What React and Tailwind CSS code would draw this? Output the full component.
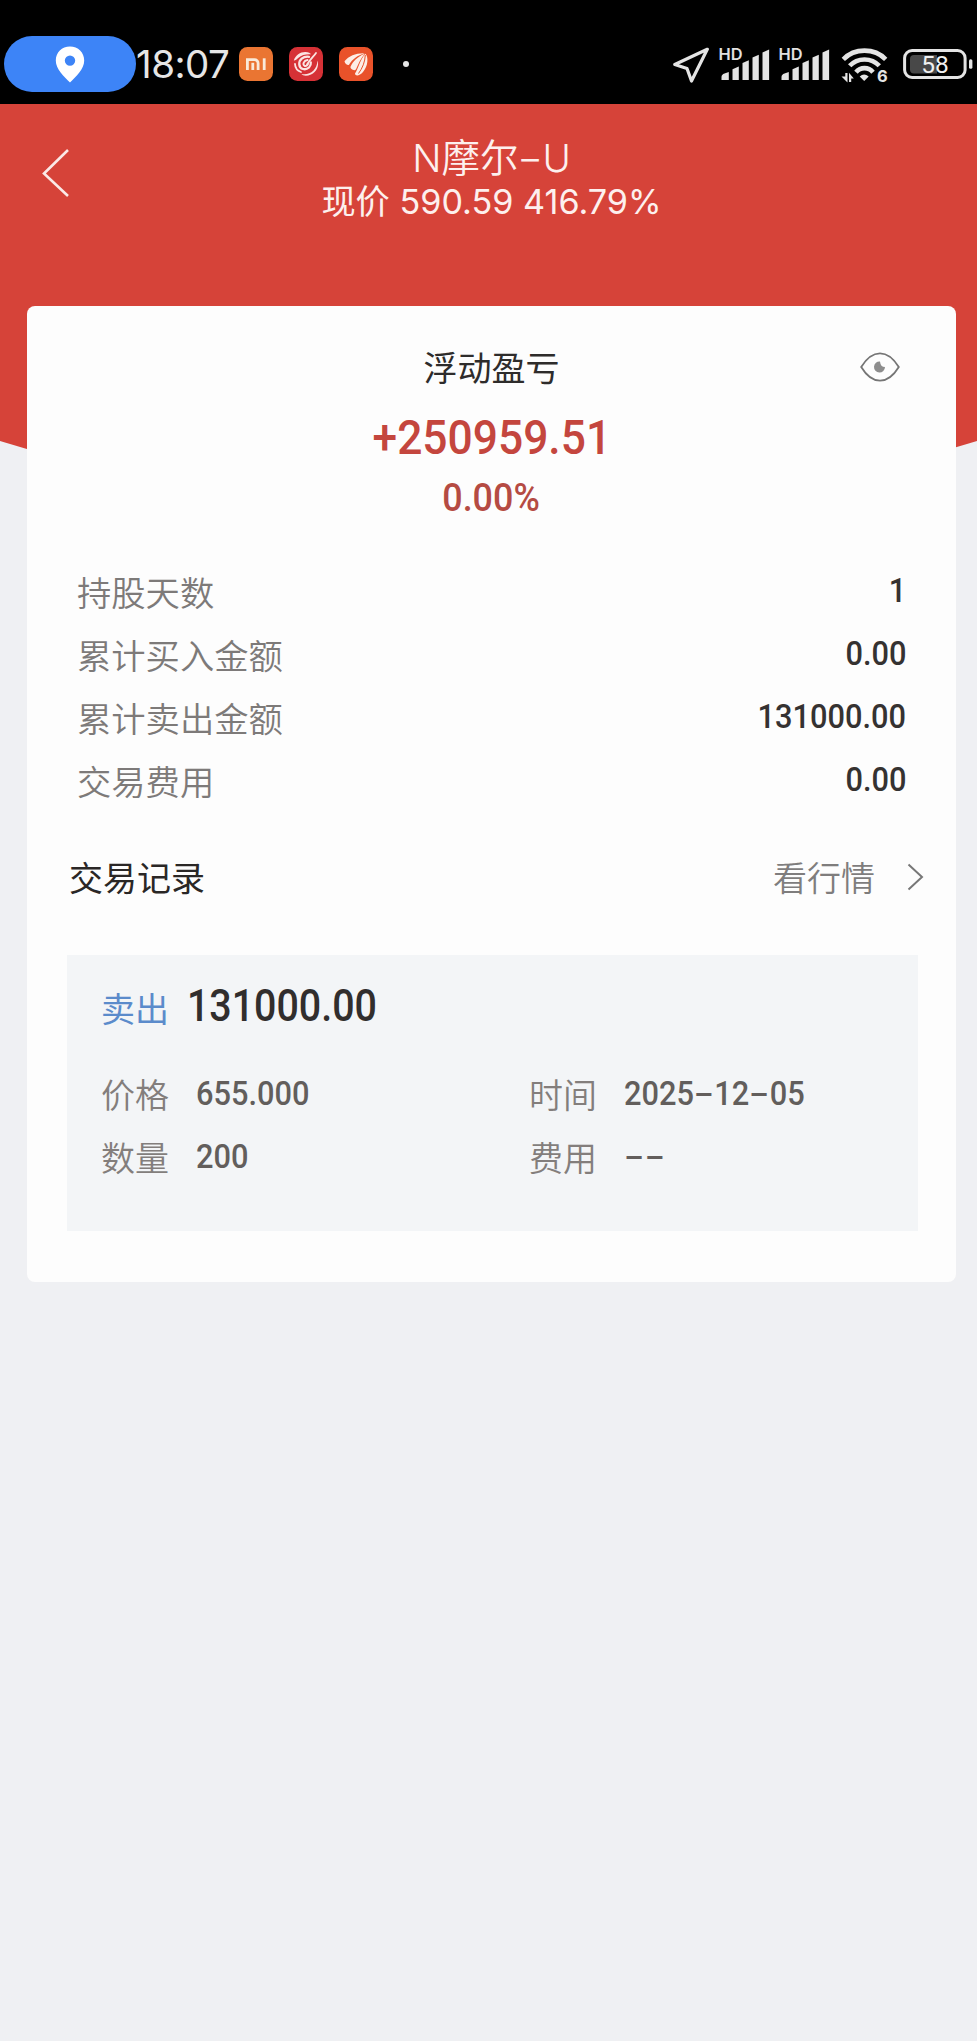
const cjk = "font-['Noto_Sans_CJK_SC',sans-serif]";
const din = "font-['Roboto','Noto_Sans_CJK_SC',sans-serif]";

function LocationPill() {
  return (
    <div className="ml-1 flex h-14 w-[132px] items-center justify-center rounded-full bg-[#3d84f7]">
      <svg width="30" height="37" viewBox="0 0 30 37">
        <path
          fill="#fff"
          fillRule="evenodd"
          d="M15 0.500C6.800 0.500 0.800 6.600 0.800 14.400c0 8.600 8.200 16 14.200 22.100 6-6.100 14.200-13.500 14.200-22.100C29.200 6.600 23.200 0.500 15 0.500zM15 9.400a5.200 5.200 0 1 1 0 10.400 5.200 5.200 0 0 1 0-10.400z"
        />
      </svg>
    </div>
  );
}

function MiIcon() {
  return (
    <svg width="34" height="34" viewBox="0 0 34 34">
      <rect width="34" height="34" rx="8.5" fill="#ea7532" />
      <g fill="none" stroke="#f9ead9" strokeWidth="2.8">
        <path d="M8.400 23V12.700H15.500a3.600 3.600 0 0 1 3.600 3.600V23" />
        <path d="M13.800 15.800V23" />
        <path d="M25.200 11.300V23" />
      </g>
    </svg>
  );
}

function SwirlIcon() {
  return (
    <svg width="34" height="34" viewBox="0 0 34 34">
      <rect width="34" height="34" rx="8.5" fill="#d63136" />
      <path fill="#fbe3e2" d="M4.800 13.500C6.500 8 11.500 4.800 16.500 5c3 .1 5 1 5.500 2.300C17 7 12.500 8 9.500 10.800 7.800 12.300 6 13.800 4.800 13.500z" />
      <path fill="#fbe3e2" d="M28.500 13.500c1.800 5.500-1 11.500-6.500 14-4 1.800-8.200 1.500-9.500-.5 4.500.8 8.800-.2 11.800-3.200 2.700-2.700 3.900-6.300 4.200-10.300z" />
      <g fill="none" stroke="#fbe3e2" strokeLinecap="round">
        <path d="M27 6C24.500 9.500 21.500 12 18 17.500" strokeWidth="1.800" />
        <path d="M20 9.800C14 9 9.800 13 10.300 17.500C10.800 22.500 16.500 23.500 20 20.500C21.500 19 22 17 21.800 15.500" strokeWidth="2.300" />
        <path d="M18.500 13C14.500 13.500 13.500 17.500 15.500 18.800C17 19.500 18.500 18.500 19 17" strokeWidth="1.900" />
        <path d="M6 17C6.200 21 8.500 23.800 12 25" strokeWidth="1.800" />
      </g>
    </svg>
  );
}

function WingIcon() {
  return (
    <svg width="34" height="34" viewBox="0 0 34 34">
      <rect width="34" height="34" rx="8.5" fill="#e9522a" />
      <g fill="#fdeee6">
        <path d="M5.500 14.200C10 9 17 6 25.500 6.300C18.500 8.500 13.500 12 10 17.800C9 19 5.800 16.500 5.500 14.200z" />
        <path d="M11.500 19.800C14 14.500 18.500 9.500 25.800 6.800C21.500 11.500 19.500 17 17 22.300C15.500 24.500 11 22 11.500 19.800z" />
        <path d="M16 26.500C19.500 21.500 21 12.500 26.500 6.800C29.500 10 29.300 19 24 25C21 28.500 16.500 30 16 26.500z" />
      </g>
      <path d="M26.300 8C26 15 23.500 21 19.500 26.500" fill="none" stroke="#e9522a" strokeWidth="1" />
    </svg>
  );
}

function Signal() {
  return (
    <svg className="overflow-visible" width="52" height="36" viewBox="0 0 52 36">
      <text x="-0.5" y="13.700" fontSize="15.800" fontWeight="600" textLength="24" lengthAdjust="spacingAndGlyphs" fill="#e2e2e2" className="font-['Inter',sans-serif]">HD</text>
      <g fill="#e4e4e4">
        <path d="M2.500 34v-3q0-2.500 3-3.500l4.300-1.500V34z" />
        <path d="M13.500 34V23.200l6.300-2.700V34z" />
        <path d="M23.500 34V17l6.300-2.700V34z" />
        <path d="M33.500 34V11.500l6.300-2.700V34z" />
        <path d="M43.500 34V6.500l6.600-3V34z" />
      </g>
    </svg>
  );
}

function Wifi() {
  return (
    <svg className="overflow-visible" width="50" height="36" viewBox="0 0 50 36">
      <g fill="none" stroke="#e4e4e4" strokeWidth="4.600">
        <path d="M2.300 13.300C13.500 1.700 33.500 1.700 44.700 13.300" />
        <path d="M8.700 19.800C16.500 11.300 30.500 11.300 38.300 19.800" />
        <path d="M15 26.200C19.500 20.700 27.500 20.700 32 26.200" />
      </g>
      <path fill="#e4e4e4" d="M18.700 30.500Q23 26.500 27.700 30.500L23.200 35z" />
      <path fill="#e4e4e4" d="M4.300 27H6.500V36.500L0.500 30.500H4.300zM8 36V26.800L12.800 32.500H10.200V36z" />
      <text x="36" y="36" fontSize="16.500" fontWeight="700" fill="#e4e4e4" className="font-['Inter',sans-serif]">6</text>
    </svg>
  );
}

function Battery() {
  return (
    <svg className="overflow-visible" width="70" height="34" viewBox="0 0 70 34">
      <rect x="1.600" y="3.500" width="60.500" height="27" rx="7.500" fill="none" stroke="#e4e4e4" strokeWidth="3" />
      <path d="M7 12a4 4 0 0 1 4-4h23v18.500H11a4 4 0 0 1-4-4z" fill="#484848" />
      <rect x="66" y="12.300" width="3.400" height="9.500" rx="1.500" fill="#e4e4e4" />
      <text x="32" y="26" textAnchor="middle" fontSize="24.500" fontWeight="400" fill="#f0f0f0" className="font-['Roboto',sans-serif]">58</text>
    </svg>
  );
}

function StatusBar() {
  return (
    <div className="flex h-[104px] w-full shrink-0 items-center justify-between bg-black pt-6">
      <div className="flex items-center">
        <LocationPill />
        <span className="w-[103px] font-['Inter',sans-serif] text-[38.500px] leading-none tracking-[-0.5px] text-[#e6e6e6]">18:07</span>
        <div className="flex items-center gap-4">
          <MiIcon />
          <SwirlIcon />
          <WingIcon />
        </div>
        <span className="ml-[30px] size-1.5 rounded-full bg-[#e6e6e6]" />
      </div>
      <div className="flex items-center pr-1">
        <svg width="38" height="38" viewBox="0 0 38 38" className="mr-2">
          <path d="M34.300 4.300L1.800 19.500L14 23.500L18.500 36z" fill="none" stroke="#e4e4e4" strokeWidth="3.200" strokeLinejoin="round" />
        </svg>
        <Signal />
        <div className="ml-2"><Signal /></div>
        <div className="ml-2.5"><Wifi /></div>
        <div className="ml-3"><Battery /></div>
      </div>
    </div>
  );
}

function Dash({ wide }) {
  return (
    <span className={wide ? "inline-block w-6 scale-x-[1.5] text-center" : "inline-block w-[22.500px] scale-x-[1.9] text-center"}>-</span>
  );
}

function SummaryRow({ label, value }) {
  return (
    <div className="flex h-[63px] items-center justify-between">
      <span className={`${cjk} text-[34.300px] leading-none font-[350] text-[#7d7a79]`}>{label}</span>
      <span className={`${din} mb-1 origin-right scale-x-[0.905] text-[34px] leading-none font-medium text-[#353231]`}>{value}</span>
    </div>
  );
}

function Field({ label, children }) {
  return (
    <div className="flex h-[63px] items-center">
      <span className={`${cjk} w-[95px] text-[34px] leading-none font-[350] text-[#837e7c]`}>{label}</span>
      <span className={`${din} mb-0.5 origin-left scale-x-[0.905] text-[34px] leading-none font-medium whitespace-nowrap text-[#625e5c]`}>{children}</span>
    </div>
  );
}

export default function App() {
  return (
    <div className="flex h-[2041px] w-[977px] flex-col overflow-hidden bg-[#eff0f3]">
      <StatusBar />

      <header className="grid h-[364px] shrink-0">
        <svg className="col-start-1 row-start-1 block" width="977" height="364" viewBox="0 0 977 364">
          <path d="M0 0H977V337Q488.500 490 0 337z" fill="#d64339" />
        </svg>
        <div className="col-start-1 row-start-1 flex">
          <svg className="mt-[43px] ml-[41px]" width="30" height="52" viewBox="0 0 30 52">
            <path d="M27 3L3 26.500L27 49" fill="none" stroke="#fbe9e7" strokeWidth="2.600" />
          </svg>
          <div className="mr-[65px] flex flex-1 flex-col items-center pt-8 text-[#fdf0ee]">
            <h1 className="font-['Inter','Noto_Sans_CJK_SC',sans-serif] text-[38.500px] leading-[44px] font-[350]">
              N摩尔<Dash wide />U
            </h1>
            <p className="font-['Inter','Noto_Sans_CJK_SC',sans-serif] text-[34.200px] leading-[44px] font-normal">
              现价 590.59 416.79%
            </p>
          </div>
        </div>
      </header>

      <main className="z-10 -mt-[162px] ml-[27px] flex h-[976px] w-[929px] shrink-0 flex-col rounded-lg bg-[#fdfdfd]">
        <section className="grid grid-cols-[1fr_auto_1fr] items-center pt-9">
          <span />
          <h2 className={`${cjk} text-[34px] leading-[50px] text-[#2e2c2b]`}>浮动盈亏</h2>
          <svg className="mr-[56px] justify-self-end" width="40" height="30" viewBox="0 0 40 30">
            <path d="M1.200 15C7 5.500 13 1.300 20 1.300S33 5.500 38.800 15C33 24.500 27 28.700 20 28.700S7 24.500 1.200 15z" fill="none" stroke="#757575" strokeWidth="1.800" />
            <path d="M20 9.500a5.500 5.500 0 1 0 5 5.500q-4.500 0-5-5.500z" fill="#8d8d8d" />
          </svg>
        </section>
        <div className={`${din} flex flex-col items-center font-medium`}>
          <span className="mt-4 scale-x-[0.905] text-[49px] leading-[60px] text-[#c4463e]">+250959.51</span>
          <span className="mt-[5px] scale-x-[0.92] text-[39px] leading-[50px] text-[#b54b43]">0.00%</span>
        </div>

        <section className="mt-[37px] flex flex-col pr-[50px] pl-[50px]">
          <SummaryRow label="持股天数" value="1" />
          <SummaryRow label="累计买入金额" value="0.00" />
          <SummaryRow label="累计卖出金额" value="131000.00" />
          <SummaryRow label="交易费用" value="0.00" />
        </section>

        <section className={`${cjk} mt-10 flex h-[50px] items-center pr-8 pl-[42px] text-[34px] leading-none`}>
          <h3 className="flex-1 font-normal text-[#2a2726]">交易记录</h3>
          <span className="font-[350] text-[#7f7d7d]">看行情</span>
          <svg className="ml-8" width="17" height="28" viewBox="0 0 17 28">
            <path d="M1.500 1.500L15 14L1.500 26.500" fill="none" stroke="#777" strokeWidth="2" />
          </svg>
        </section>

        <section className="mt-[53px] ml-10 h-[276px] w-[851px] bg-[#f3f5f7] pt-6 pl-[34px]">
          <div className="flex h-[58px] items-center">
            <span className={`${cjk} w-[86px] text-[34px] leading-none text-[#5b8bcb]`}>卖出</span>
            <span className={`${din} mb-0.5 origin-left scale-x-[0.905] text-[43.500px] leading-none font-medium text-[#312e2d]`}>131000.00</span>
          </div>
          <div className="mt-[25px] grid grid-cols-[428px_1fr]">
            <Field label="价格">655.000</Field>
            <Field label="时间">2025<Dash />12<Dash />05</Field>
            <Field label="数量">200</Field>
            <Field label="费用"><Dash /><Dash /></Field>
          </div>
        </section>
      </main>
    </div>
  );
}
